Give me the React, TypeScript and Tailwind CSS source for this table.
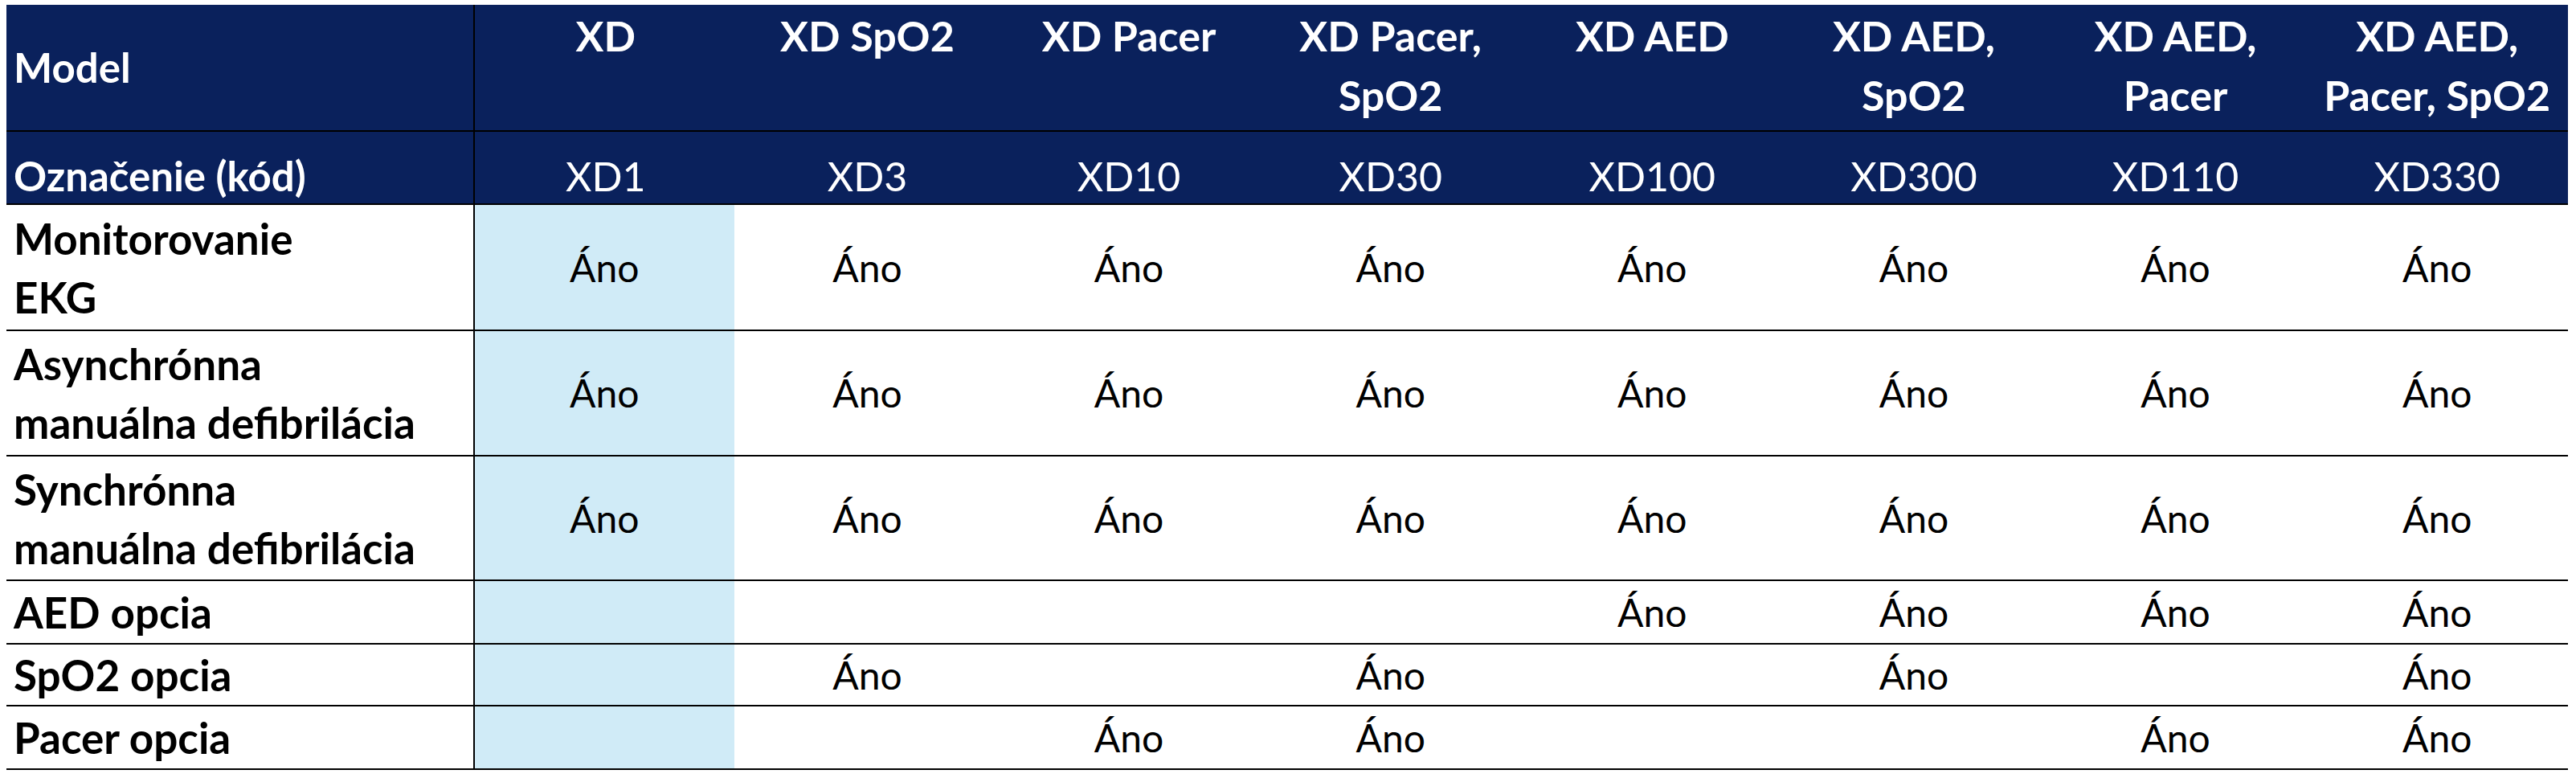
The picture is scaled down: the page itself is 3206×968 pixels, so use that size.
const models = [
  { name: ["XD"], code: "XD1" },
  { name: ["XD SpO2"], code: "XD3" },
  { name: ["XD Pacer"], code: "XD10" },
  { name: ["XD Pacer,", "SpO2"], code: "XD30" },
  { name: ["XD AED"], code: "XD100" },
  { name: ["XD AED,", "SpO2"], code: "XD300" },
  { name: ["XD AED,", "Pacer"], code: "XD110" },
  { name: ["XD AED,", "Pacer, SpO2"], code: "XD330" },
];

const features = [
  { label: ["Monitorovanie", "EKG"], values: [1, 1, 1, 1, 1, 1, 1, 1], h: "h-[157px]" },
  { label: ["Asynchrónna", "manuálna defibrilácia"], values: [1, 1, 1, 1, 1, 1, 1, 1], h: "h-[156px]" },
  { label: ["Synchrónna", "manuálna defibrilácia"], values: [1, 1, 1, 1, 1, 1, 1, 1], h: "h-[155px]" },
  { label: ["AED opcia"], values: [0, 0, 0, 0, 1, 1, 1, 1], h: "h-[79px]" },
  { label: ["SpO2 opcia"], values: [0, 1, 0, 1, 0, 1, 0, 1], h: "h-[77px]" },
  { label: ["Pacer opcia"], values: [0, 0, 1, 1, 0, 0, 1, 1], h: "h-[79px]" },
];

const row = "grid grid-cols-[583px_repeat(8,minmax(0,1fr))] border-b-2 border-black";

export default function App() {
  return (
    <div className="min-h-screen bg-white pt-[6px] pl-[8px] font-['Lato','Liberation_Sans',sans-serif]">
      <div className="w-[3188px]">

        {/* ========= HEADER: MODEL NAMES ========= */}
        <div className={`${row} h-[158px] bg-[#0a215c] text-white`}>
          <div className="flex items-center border-r-2 border-black pl-[9px] text-[51px] font-bold leading-[60px]">
            Model
          </div>
          {models.map((m) => (
            <div key={m.code} className="pt-[1px] text-center text-[52px] font-bold leading-[74px]">
              {m.name.map((line) => (
                <div key={line}>{line}</div>
              ))}
            </div>
          ))}
        </div>

        {/* ========= HEADER: CODES ========= */}
        <div className={`${row} h-[91px] bg-[#0a215c] text-white`}>
          <div className="flex items-end border-r-2 border-black pb-[4px] pl-[9px] text-[51px] font-bold leading-[60px]">
            Označenie (kód)
          </div>
          {models.map((m) => (
            <div key={m.code} className="flex items-end justify-center pb-[4px] text-[50px] leading-[60px]">
              {m.code}
            </div>
          ))}
        </div>

        {/* ========= FEATURE ROWS ========= */}
        {features.map((f) => (
          <div key={f.label.join(" ")} className={`${row} ${f.h} text-black`}>
            <div className="flex flex-col justify-center border-r-2 border-black pl-[9px] text-[53px] font-bold leading-[73px]">
              {f.label.map((line) => (
                <div key={line}>{line}</div>
              ))}
            </div>
            {f.values.map((v, i) => (
              <div
                key={i}
                className={`flex items-center justify-center text-[48px] ${i === 0 ? "bg-[#d0ebf7] mr-[3px]" : ""}`}
              >
                {v ? "Áno" : ""}
              </div>
            ))}
          </div>
        ))}

      </div>
    </div>
  );
}
